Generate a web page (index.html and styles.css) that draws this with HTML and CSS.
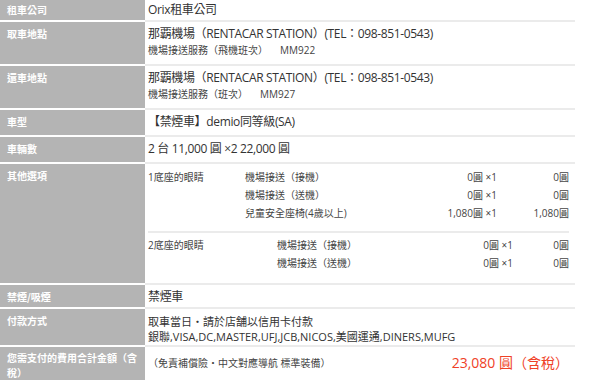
FILE: index.html
```html
<!DOCTYPE html>
<html lang="zh-Hant">
<head>
<meta charset="utf-8">
<title>預約內容</title>
<link rel="stylesheet" href="styles.css">
</head>
<body>
<table class="info">
  <tr class="row-first">
    <th>租車公司</th>
    <td>Orix租車公司</td>
  </tr>
  <tr>
    <th>取車地點</th>
    <td>
      <div class="main">那覇機場（RENTACAR STATION）(TEL：098-851-0543)</div>
      <div class="sub">機場接送服務（飛機班次）<span class="flight">MM922</span></div>
    </td>
  </tr>
  <tr>
    <th>還車地點</th>
    <td>
      <div class="main">那覇機場（RENTACAR STATION）(TEL：098-851-0543)</div>
      <div class="sub">機場接送服務（班次）<span class="flight">MM927</span></div>
    </td>
  </tr>
  <tr>
    <th>車型</th>
    <td>【禁煙車】demio同等級(SA)</td>
  </tr>
  <tr>
    <th>車輛數</th>
    <td>2 台 11,000 圓 ×2 22,000 圓</td>
  </tr>
  <tr>
    <th>其他選項</th>
    <td class="opts">
      <div class="grp g1">
        <div class="gname">1底座的眼睛</div>
        <div class="items">
          <div class="item"><span>機場接送（接機）</span><span class="price">0圓 ×1</span><span class="sum">0圓</span></div>
          <div class="item"><span>機場接送（送機）</span><span class="price">0圓 ×1</span><span class="sum">0圓</span></div>
          <div class="item"><span>兒童安全座椅(4歲以上)</span><span class="price">1,080圓 ×1</span><span class="sum">1,080圓</span></div>
        </div>
      </div>
      <div class="grp g2">
        <div class="gname">2底座的眼睛</div>
        <div class="items">
          <div class="item"><span>機場接送（接機）</span><span class="price">0圓 ×1</span><span class="sum">0圓</span></div>
          <div class="item"><span>機場接送（送機）</span><span class="price">0圓 ×1</span><span class="sum">0圓</span></div>
        </div>
      </div>
    </td>
  </tr>
  <tr class="row-short">
    <th>禁煙/吸煙</th>
    <td>禁煙車</td>
  </tr>
  <tr class="row-pay">
    <th>付款方式</th>
    <td>
      <div>取車當日・請於店舗以信用卡付款</div>
      <div>銀聯,VISA,DC,MASTER,UFJ,JCB,NICOS,美國運通,DINERS,MUFG</div>
    </td>
  </tr>
  <tr class="row-total">
    <th>您需支付的費用合計金額（含稅）</th>
    <td>
      <div class="total">
        <span class="note">（免責補償險・中文對應導航 標準裝備）</span>
        <span class="amount">23,080 圓（含稅）</span>
      </div>
    </td>
  </tr>
</table>
</body>
</html>
```

FILE: styles.css
```css
html, body {
  margin: 0;
  padding: 0;
  background: #ffffff;
}

body {
  font-family: "Open Sans", "Noto Sans CJK TC", sans-serif;
  color: #333333;
}

.info {
  width: 575px;
  border-collapse: separate;
  border-spacing: 0;
}

.info th {
  box-sizing: border-box;
  width: 145px;
  padding: 4px 7px 0 7px;
  background: #b4b4b4;
  color: #ffffff;
  font-family: "Noto Sans CJK TC", sans-serif;
  font-size: 10px;
  font-weight: bold;
  line-height: 15px;
  text-align: left;
  vertical-align: top;
  border-bottom: 2px solid #ffffff;
}

.info td {
  padding: 4px 6px 5px 3px;
  font-size: 12px;
  line-height: 16px;
  letter-spacing: -0.35px;
  vertical-align: top;
  border-bottom: 2px solid #ebebeb;
}

.row-first th {
  padding-top: 2px;
}

.row-first td {
  padding-top: 2px;
  padding-bottom: 2px;
}

.sub {
  font-size: 10px;
  line-height: 17px;
  letter-spacing: 0;
  color: #444444;
}

.flight {
  margin-left: 12px;
}

.opts {
  color: #444444;
}

.grp {
  display: flex;
  font-size: 10px;
  line-height: 18px;
  letter-spacing: 0;
}

.g1 {
  padding-bottom: 9px;
  border-bottom: 2px solid #ebebeb;
}

.g2 {
  padding-top: 3px;
  padding-bottom: 6px;
}

.g1 .gname {
  width: 97px;
}

.g2 .gname {
  width: 129px;
}

.items {
  flex: 1;
}

.item {
  display: grid;
  grid-template-columns: 1fr 90px 72px;
}

.g2 .item {
  grid-template-columns: 1fr 90px 56px;
}

.price,
.sum {
  text-align: right;
}

.row-short td {
  padding-bottom: 2px;
}

.row-pay td {
  padding-top: 5px;
  padding-bottom: 1px;
  font-size: 11px;
  line-height: 15px;
  letter-spacing: 0;
}

.row-total th {
  padding-top: 3px;
  border-bottom: none;
}

.row-total td {
  vertical-align: middle;
  letter-spacing: 0;
  border-bottom: none;
}

.total {
  display: flex;
  justify-content: space-between;
  align-items: center;
}

.note {
  font-size: 10px;
  color: #444444;
}

.amount {
  font-size: 14px;
  color: #ef4127;
}
```
